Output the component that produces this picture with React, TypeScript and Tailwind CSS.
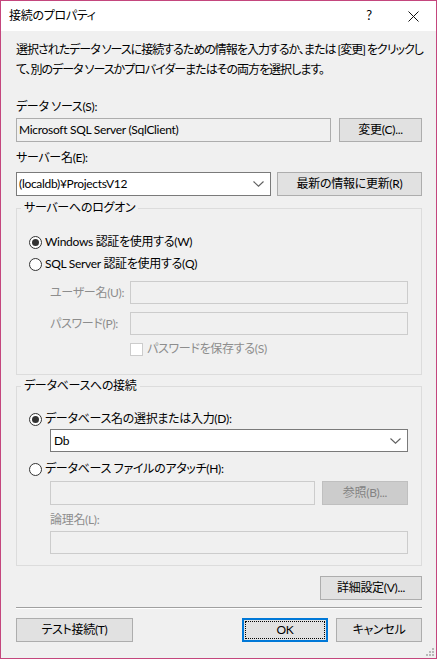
import React from 'react';

const font = "[font-family:Lato,'Noto_Sans_CJK_JP',sans-serif] [font-feature-settings:'palt'] tracking-[-0.3px]";

const Chevron = () => (
  <svg width="11" height="6" viewBox="0 0 11 6" className="shrink-0">
    <path d="M0.5 0.5 L5.5 5.2 L10.5 0.5" fill="none" stroke="#606060" strokeWidth="1.1" />
  </svg>
);

const Radio = ({ checked }: { checked?: boolean }) => (
  <span className="w-[13px] h-[13px] rounded-full border border-[#333333] bg-white flex items-center justify-center shrink-0">
    {checked && <span className="w-[7px] h-[7px] rounded-full bg-[#333333]" />}
  </span>
);

const Button = ({ children, className = '', disabled }: { children: React.ReactNode; className?: string; disabled?: boolean }) => (
  <div
    className={`h-[24px] flex items-center justify-center border text-[12px] ${
      disabled ? 'bg-[#cccccc] border-[#bfbfbf] text-[#838383]' : 'bg-[#e1e1e1] border-[#adadad] text-black'
    } ${className}`}
  >
    {children}
  </div>
);

const Legend = ({ children }: { children: React.ReactNode }) => (
  <legend className="ml-[4px] px-[3px] leading-[20px] text-[12px] text-black">{children}</legend>
);

export default function App() {
  return (
    <div className={`w-[437px] h-[659px] border border-[#c4467d] bg-[#f0f0f0] flex flex-col relative text-black text-[12px] ${font}`}>
      {/* title bar */}
      <div className="h-[30px] bg-white flex items-center shrink-0">
        <span className="ml-[8px] text-[12px]">接続のプロパティ</span>
        <span className="ml-auto w-[10px] text-center text-[13px] mr-[34px]">?</span>
        <svg width="11" height="11" viewBox="0 0 11 11" className="mr-[17px]">
          <path d="M0.5 0.5 L10.5 10.5 M10.5 0.5 L0.5 10.5" stroke="#111" strokeWidth="1" />
        </svg>
      </div>

      <div className="pl-[15px] pr-[14px] flex flex-col">
        <p className="mt-[9px] leading-[20px] whitespace-nowrap tracking-[-1px]">
          選択されたデータ ソースに接続するための情報を入力するか、または [変更] をクリックし
          <br />
          て、別のデータ ソースかプロバイダーまたはその両方を選択します。
        </p>

        <div className="mt-[17px] leading-[20px]">データ ソース(S):</div>
        <div className="mt-[1px] flex gap-[8px]">
          <div className="flex-1 h-[24px] border border-[#adadad] bg-[#f0f0f0] flex items-center px-[2px]">
            Microsoft SQL Server (SqlClient)
          </div>
          <Button className="w-[83px]">変更(C)...</Button>
        </div>

        <div className="mt-[6px] leading-[20px]">サーバー名(E):</div>
        <div className="mt-[4px] flex gap-[6px]">
          <div className="w-[255px] h-[24px] border border-[#7a7a7a] bg-white flex items-center pl-[2px] pr-[6px]">
            <span className="flex-1">(localdb)¥ProjectsV12</span>
            <Chevron />
          </div>
          <Button className="flex-1">最新の情報に更新(R)</Button>
        </div>

        {/* logon group */}
        <fieldset className="mt-[2px] border border-[#dcdcdc] pb-[15px]">
          <Legend>サーバーへのログオン</Legend>
          <div className="pl-[12px] pr-[13px] flex flex-col">
            <div className="mt-[14px] h-[20px] flex items-center gap-[3px]">
              <Radio checked />
              <span>Windows 認証を使用する(W)</span>
            </div>
            <div className="mt-[2px] h-[20px] flex items-center gap-[3px]">
              <Radio />
              <span>SQL Server 認証を使用する(Q)</span>
            </div>
            <div className="mt-[7px] flex items-center text-[#8d8d8d] pl-[21px]">
              <span className="w-[80px]">ユーザー名(U):</span>
              <div className="flex-1 h-[23px] border border-[#cccccc] bg-[#f0f0f0]" />
            </div>
            <div className="mt-[8px] flex items-center text-[#8d8d8d] pl-[21px]">
              <span className="w-[80px]">パスワード(P):</span>
              <div className="flex-1 h-[23px] border border-[#cccccc] bg-[#f0f0f0]" />
            </div>
            <div className="mt-[4px] h-[20px] flex items-center gap-[4px] pl-[101px] text-[#8d8d8d]">
              <span className="w-[13px] h-[13px] border border-[#cccccc] bg-white shrink-0" />
              <span>パスワードを保存する(S)</span>
            </div>
          </div>
        </fieldset>

        {/* database group */}
        <fieldset className="mt-[1px] border border-[#dcdcdc] pb-[11px]">
          <Legend>データベースへの接続</Legend>
          <div className="pl-[12px] pr-[13px] flex flex-col">
            <div className="mt-[13px] h-[20px] flex items-center gap-[3px]">
              <Radio checked />
              <span>データベース名の選択または入力(D):</span>
            </div>
            <div className="ml-[21px] h-[23px] border border-[#7a7a7a] bg-white flex items-center pl-[3px] pr-[6px]">
              <span className="flex-1">Db</span>
              <Chevron />
            </div>
            <div className="mt-[7px] h-[20px] flex items-center gap-[3px]">
              <Radio />
              <span>データベース ファイルのアタッチ(H):</span>
            </div>
            <div className="mt-[2px] ml-[21px] flex gap-[7px]">
              <div className="flex-1 h-[24px] border border-[#cccccc] bg-[#f0f0f0]" />
              <Button disabled className="w-[86px]">参照(B)...</Button>
            </div>
            <div className="mt-[5px] ml-[21px] leading-[20px] text-[#8d8d8d]">論理名(L):</div>
            <div className="mt-[1px] ml-[21px] h-[23px] border border-[#cccccc] bg-[#f0f0f0]" />
          </div>
        </fieldset>

        <div className="mt-[10px] flex justify-end">
          <Button className="w-[102px]">詳細設定(V)...</Button>
        </div>

        <div className="mt-[7px] h-[2px] border-t border-[#a0a0a0] border-b border-b-white" />

        <div className="mt-[9px] flex">
          <Button className="w-[117px]">テスト接続(T)</Button>
          <div className="ml-auto w-[86px] h-[24px] border-2 border-[#0078d7] bg-[#e1e1e1] flex items-center justify-center outline-1 outline-dotted outline-black [outline-offset:-4px]">
            OK
          </div>
          <Button className="ml-[8px] w-[86px]">キャンセル</Button>
        </div>
      </div>

      {/* resize grip */}
      <svg width="10" height="10" viewBox="0 0 10 10" className="absolute right-[1px] bottom-[1px]">
        {[
          [7, 1],
          [4, 4],
          [7, 4],
          [1, 7],
          [4, 7],
          [7, 7],
        ].map(([x, y], i) => (
          <rect key={i} x={x} y={y} width="2" height="2" fill="#b8b8b8" />
        ))}
      </svg>
    </div>
  );
}
